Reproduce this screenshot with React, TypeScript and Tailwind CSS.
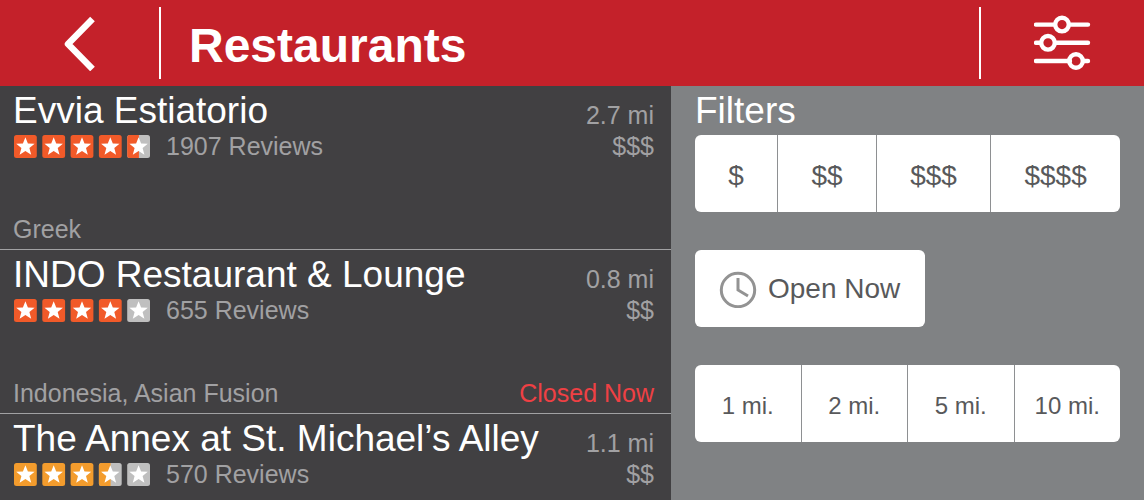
import { useState } from "react"

type Restaurant = {
  name: string
  rating: number
  reviews: number
  distance: string
  price: string
  category?: string
  closed?: boolean
}

const restaurants: Restaurant[] = [
  {
    name: "Evvia Estiatorio",
    rating: 4.5,
    reviews: 1907,
    distance: "2.7 mi",
    price: "$$$",
    category: "Greek",
  },
  {
    name: "INDO Restaurant & Lounge",
    rating: 4,
    reviews: 655,
    distance: "0.8 mi",
    price: "$$",
    category: "Indonesia, Asian Fusion",
    closed: true,
  },
  {
    name: "The Annex at St. Michael’s Alley",
    rating: 3.5,
    reviews: 570,
    distance: "1.1 mi",
    price: "$$",
  },
]

const prices = ["$", "$$", "$$$", "$$$$"]
const distances = ["1 mi.", "2 mi.", "5 mi.", "10 mi."]

function Stars({ rating }: { rating: number }) {
  const color = rating >= 4 ? "#f15a29" : "#f39c2d"

  return (
    <svg
      width="136"
      height="23"
      viewBox="0 0 136 23"
      role="img"
      aria-label={`${rating} out of 5 stars`}
      className="shrink-0"
    >
      {[0, 1, 2, 3, 4].map((i) => {
        const fill = Math.max(0, Math.min(1, rating - i))
        return (
          <g key={i} transform={`translate(${i * 28.3} 0)`}>
            <rect
              width="22.8"
              height="23"
              rx="2.5"
              fill={fill === 1 ? color : "#bfbfbf"}
            />
            {fill === 0.5 && (
              <path
                d="M2.5 0H11.7V23H2.5A2.5 2.5 0 0 1 0 20.5V2.5A2.5 2.5 0 0 1 2.5 0Z"
                fill={color}
              />
            )}
            <path
              d="M11.4 2.2L13.9 8.4L20.6 8.8L15.4 13L17.2 19.7L11.4 16L5.6 19.7L7.4 13L2.2 8.8L8.9 8.4Z"
              fill="#fff"
            />
          </g>
        )
      })}
    </svg>
  )
}

function RestaurantRow({ restaurant }: { restaurant: Restaurant }) {
  return (
    <li className="flex min-h-[164px] shrink-0 justify-between border-b border-[#a1a1a3] pl-[13px] pr-[17px]">
      <div className="flex flex-col pt-[5px]">
        <h2 className="whitespace-nowrap text-[37px] leading-10 text-white">
          {restaurant.name}
        </h2>
        <div className="mt-px flex items-center gap-4 pl-px text-[25px] leading-7">
          <Stars rating={restaurant.rating} />
          <span>{restaurant.reviews} Reviews</span>
        </div>
        <p className="mt-auto pb-1.5 text-[25px] leading-7">
          {restaurant.category}
        </p>
      </div>
      <div className="flex flex-col pt-[14px] text-right text-[25px] leading-[31px]">
        <span>{restaurant.distance}</span>
        <span>{restaurant.price}</span>
        {restaurant.closed && (
          <p className="mt-auto pb-1.5 leading-7 text-[#ef4044]">Closed Now</p>
        )}
      </div>
    </li>
  )
}

export default function App() {
  const [price, setPrice] = useState<string | null>(null)
  const [distance, setDistance] = useState<string | null>(null)
  const [openNow, setOpenNow] = useState(false)

  return (
    <div className="flex h-screen flex-col overflow-hidden bg-[#414042] font-['Liberation_Sans',Arial,sans-serif]">
      <header className="flex h-[86px] shrink-0 items-center bg-[#c4212a] text-white">
        <button
          type="button"
          aria-label="Back"
          className="flex h-[72px] w-[161px] items-center justify-center border-r-2 border-white"
        >
          <svg width="32" height="56" viewBox="0 0 32 56" fill="none">
            <path
              d="M28.5 4L4 29L28.5 54"
              stroke="currentColor"
              strokeWidth="6.5"
              strokeLinejoin="round"
            />
          </svg>
        </button>
        <h1 className="flex-1 pl-7 pt-1.5 text-5xl font-bold">Restaurants</h1>
        <button
          type="button"
          aria-label="Filter settings"
          className="flex h-[72px] w-[165px] items-center justify-center border-l-2 border-white"
        >
          <svg width="58" height="56" viewBox="0 0 58 56" fill="none">
            <g stroke="currentColor" strokeWidth="4.4" strokeLinecap="round">
              <path d="M2 9.6H20M36 9.6H54" />
              <path d="M2 27.8H6M22 27.8H54" />
              <path d="M2 46H36M50 46H54" />
              <circle cx="28" cy="9.6" r="6.8" />
              <circle cx="14" cy="27.8" r="6.8" />
              <circle cx="42" cy="46" r="6.8" />
            </g>
          </svg>
        </button>
      </header>

      <div className="grid min-h-0 flex-1 grid-cols-[671fr_473fr]">
        <ul className="flex flex-col overflow-hidden text-[#a1a1a3]">
          {restaurants.map((restaurant) => (
            <RestaurantRow key={restaurant.name} restaurant={restaurant} />
          ))}
        </ul>

        <aside className="flex flex-col items-start bg-[#808284] px-6 pt-[5px] text-[#58595b]">
          <h2 className="mb-1 text-[37px] leading-10 text-white">Filters</h2>
          <div
            role="group"
            aria-label="Price"
            className="flex h-[77px] w-full divide-x divide-[#8e9092] overflow-hidden rounded-md bg-white text-[28px]"
          >
            {prices.map((p) => (
              <button
                key={p}
                type="button"
                aria-pressed={price === p}
                onClick={() => setPrice(price === p ? null : p)}
                className="flex-auto pt-1 aria-pressed:bg-gray-200"
              >
                <span className="px-8">{p}</span>
              </button>
            ))}
          </div>

          <button
            type="button"
            aria-pressed={openNow}
            onClick={() => setOpenNow(!openNow)}
            className="mt-[38px] flex h-[77px] items-center gap-[11px] rounded-md bg-white pl-6 pr-[25px] text-[28px] aria-pressed:bg-gray-200"
          >
            <svg width="38" height="38" viewBox="0 0 38 38" fill="none">
              <g stroke="#939393" strokeWidth="3">
                <circle cx="19" cy="20" r="16.7" />
                <path d="M19 8V20L29 26" />
              </g>
            </svg>
            Open Now
          </button>

          <div
            role="group"
            aria-label="Distance"
            className="mt-[38px] flex h-[77px] w-full divide-x divide-[#8e9092] overflow-hidden rounded-md bg-white text-2xl"
          >
            {distances.map((d) => (
              <button
                key={d}
                type="button"
                aria-pressed={distance === d}
                onClick={() => setDistance(distance === d ? null : d)}
                className="flex-1 pt-1 aria-pressed:bg-gray-200"
              >
                {d}
              </button>
            ))}
          </div>
        </aside>
      </div>
    </div>
  )
}
